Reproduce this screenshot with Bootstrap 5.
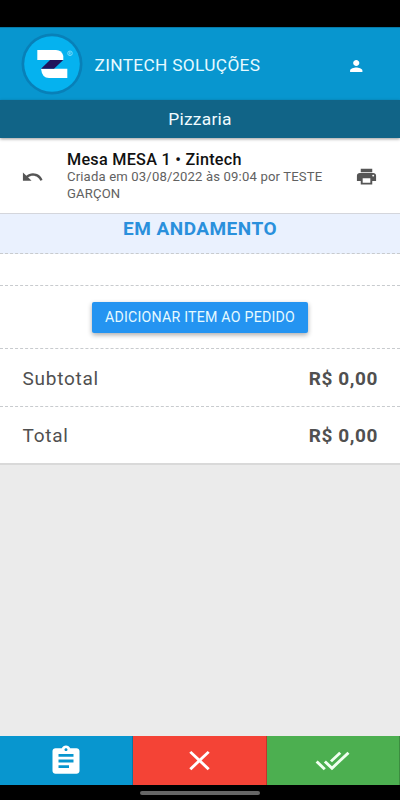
<!DOCTYPE html>
<html lang="pt-BR">
<head>
<meta charset="utf-8">
<meta name="viewport" content="width=device-width, initial-scale=1">
<title>Zintech Soluções</title>
<link href="https://cdn.jsdelivr.net/npm/bootstrap@5.3.0/dist/css/bootstrap.min.css" rel="stylesheet">
<style>
body{font-family:Roboto,sans-serif;background:#ebebeb;color:#505050;overflow:hidden}
svg{display:block;flex:none}
.screen{height:800px}
.system-top{height:27px;background:#000}
.app-bar{height:73px;background:#0896cf;padding:0 35px 0 21px;border-top:1px solid #067aa8}
.brand{font-size:17.3px;line-height:24px;color:#e6faff;margin:1px 0 0 11.5px;letter-spacing:.33px;white-space:nowrap}
.place{height:38px;background:#116487;color:#f0fbff;font-size:17.4px;line-height:39px;letter-spacing:.25px;box-shadow:0 1px 3px #0006;z-index:1}
.order{height:76px;background:#fff;border-bottom:1px solid #d4d6dc;padding:12px 22px 0 21px}
.order-text{margin-left:23px;width:280px}
.order-title{font-size:16.2px;line-height:19px;font-weight:500;color:#111;letter-spacing:.27px}
.order-note{font-size:13.1px;line-height:17.4px;color:#616161;letter-spacing:.16px;margin-top:-1px}
.status{height:40px;background:#eaf1fe;color:#2a90dc;font-size:19px;font-weight:700;line-height:29px;letter-spacing:.48px}
.dash-line{border-bottom:1px dashed #c8cbce}
.blank{height:32px;background:#fff}
.action{height:63px;background:#fff}
.add-btn{width:216px;height:31px;padding:0;border:0;border-radius:2px;background:#2494f1;color:#e6faff;font-size:14.2px;line-height:30px;letter-spacing:.22px;box-shadow:0 2px 5px #0005}
.add-btn:hover{background:#1b87e0;color:#fff}
.sum{height:58px;background:#fff;padding:3px 22px 0 22.5px;font-size:19px;letter-spacing:.74px}
.sum strong{letter-spacing:.6px}
.sum-last{border-bottom:2px solid #d9d9d9}
.bottom-actions{height:49px}
.tab-item{border:0;border-right:1px solid #0003;color:#fff;padding:0}
.tab-list{background:#0896cf}.tab-cancel{background:#f44336}.tab-done{background:#4caf50}
.system-bottom{height:15px;background:#000}
.handle{width:120px;height:4px;border-radius:2px;background:#666}
</style>
<script src="https://cdn.jsdelivr.net/npm/bootstrap@5.3.0/dist/js/bootstrap.bundle.min.js"></script>
</head>
<body>
<div class="screen d-flex flex-column">
  <div class="system-top"></div>
  <header class="app-bar d-flex align-items-center">
    <svg width="62" height="62" viewBox="21 33 62 62" role="img" aria-label="Zintech">
      <circle cx="52" cy="64" r="30.5" fill="#0880b8"/><circle cx="52" cy="64" r="27.8" fill="#05b2ef"/>
      <path d="M37.300 50H56Q62 50 63.300 56V60H37.300Z" fill="#fff"/>
      <path d="M41 68.700H67.300V78H49Q42 78 41 68.700Z" fill="#fff"/>
      <path d="M50 60H63.200L54 68.700H41Z" fill="#21145c"/>
      <circle cx="70" cy="53.300" r="2.300" fill="none" stroke="#8de0fa" stroke-width=".8"/><path d="M69.300 54.700V52h.9q1.300.7 0 1.400h-.9m.9 0 .8 1.300" fill="none" stroke="#8de0fa" stroke-width=".6"/>
    </svg>
    <span class="brand">ZINTECH SOLUÇÕES</span>
    <svg class="ms-auto mt-1" width="18.500" height="18" viewBox="0 0 24 24" preserveAspectRatio="none" fill="#fff"><path d="M12 12c2.210 0 4-1.790 4-4s-1.790-4-4-4-4 1.790-4 4 1.790 4 4 4zm0 2c-2.670 0-8 1.340-8 4v2h16v-2c0-2.660-5.330-4-8-4z"/></svg>
  </header>
  <div class="place text-center position-relative">Pizzaria</div>
  <section class="order d-flex">
    <svg class="mt-3" width="23" height="22" viewBox="0 0 24 24" preserveAspectRatio="none" fill="#555"><path d="M12.500 8c-2.650 0-5.050.99-6.900 2.600L2 7v9h9l-3.620-3.620c1.390-1.160 3.160-1.880 5.120-1.880 3.540 0 6.550 2.310 7.600 5.500l2.370-.78C21.080 11.030 17.150 8 12.500 8z"/></svg>
    <div class="order-text">
      <div class="order-title">Mesa MESA 1 • Zintech</div>
      <div class="order-note">Criada em 03/08/2022 às 09:04 por TESTE<br>GARÇON</div>
    </div>
    <svg class="mt-3 ms-auto" width="23" height="21" viewBox="0 0 24 24" preserveAspectRatio="none" fill="#555"><path d="M19 8H5c-1.660 0-3 1.340-3 3v6h4v4h12v-4h4v-6c0-1.660-1.340-3-3-3zm-3 11H8v-5h8v5zm3-7c-.55 0-1-.45-1-1s.45-1 1-1 1 .45 1 1-.45 1-1 1zm-1-9H6v4h12V3z"/></svg>
  </section>
  <div class="status dash-line text-center">EM ANDAMENTO</div>
  <div class="blank dash-line"></div>
  <div class="action dash-line d-flex align-items-center justify-content-center"><button class="btn add-btn">ADICIONAR ITEM AO PEDIDO</button></div>
  <div class="sum dash-line d-flex align-items-center justify-content-between"><span>Subtotal</span><strong>R$ 0,00</strong></div>
  <div class="sum sum-last d-flex align-items-center justify-content-between"><span>Total</span><strong>R$ 0,00</strong></div>
  <main class="flex-grow-1"></main>
  <nav class="bottom-actions row g-0">
    <button class="tab-item tab-list col-4 d-flex align-items-center justify-content-center" aria-label="Pedido"><svg width="36" height="34" viewBox="0 0 24 24" preserveAspectRatio="none" fill="#fff"><path d="M19 3h-4.180C14.400 1.840 13.300 1 12 1c-1.300 0-2.400.84-2.820 2H5c-1.100 0-2 .9-2 2v14c0 1.100.9 2 2 2h14c1.100 0 2-.9 2-2V5c0-1.100-.9-2-2-2zm-7 0c.55 0 1 .45 1 1s-.45 1-1 1-1-.45-1-1 .45-1 1-1zm2 14H7v-2h7v2zm3-4H7v-2h10v2zm0-4H7V7h10v2z"/></svg></button>
    <button class="tab-item tab-cancel col-4 d-flex align-items-center justify-content-center" aria-label="Cancelar"><svg width="35" height="33" viewBox="0 0 24 24" preserveAspectRatio="none" fill="#fff"><path d="M19 6.410L17.590 5 12 10.590 6.410 5 5 6.410 10.590 12 5 17.590 6.410 19 12 13.410 17.590 19 19 17.590 13.410 12z"/></svg></button>
    <button class="tab-item tab-done col-4 d-flex align-items-center justify-content-center" aria-label="Concluir"><svg width="35" height="33" viewBox="0 0 24 24" preserveAspectRatio="none" fill="#f0fff0"><path d="M18 7l-1.410-1.410-6.340 6.340 1.410 1.410L18 7zm4.240-1.410L11.660 16.170 7.480 12l-1.410 1.410L11.660 19l12-12-1.420-1.410zM.41 13.410L6 19l1.410-1.410L1.830 12 .41 13.410z"/></svg></button>
  </nav>
  <div class="system-bottom d-flex align-items-center justify-content-center"><div class="handle"></div></div>
</div>
</body>
</html>
